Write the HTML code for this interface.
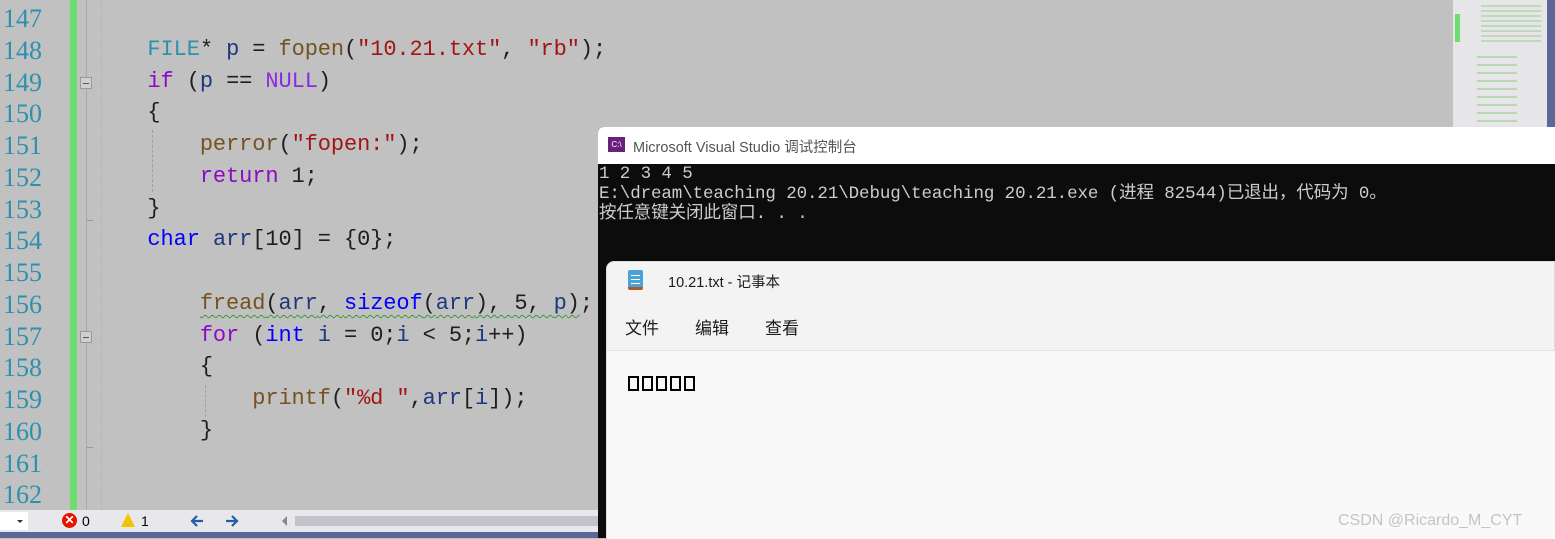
<!DOCTYPE html>
<html><head><meta charset="utf-8">
<style>
*{margin:0;padding:0;box-sizing:border-box}
body{width:1555px;height:538px;overflow:hidden;background:#c1c1c1;position:relative;font-family:"Liberation Mono","Noto Sans CJK SC",monospace}
.ed{position:absolute;left:0;top:0;width:1453px;height:510px;background:#c1c1c1}
.ln{position:absolute;left:3px;font-size:26px;color:#2b91af;font-family:"Liberation Serif",serif;line-height:30px}
.code{position:absolute;left:95px;font-size:22px;white-space:pre;color:#1e1e1e;letter-spacing:-0.1px}
.green{position:absolute;left:70px;top:0;width:7px;height:510px;background:#6edc6e}
.vl{position:absolute;left:86px;top:0;width:1px;height:510px;background:#a8a8a8}
.fold{position:absolute;left:80px;width:12px;height:12px;border:1px solid #999;background:#cfcfcf}
.fold:after{content:"";position:absolute;left:2px;top:5px;width:6px;height:1px;background:#555}
.guide{position:absolute;border-left:1px dashed #a0a0a0;width:0}
.kw{color:#8f08c4}.ty{color:#0000ff}.fn{color:#74531f}.st{color:#a31515}.va{color:#1f377f}.cl{color:#2b91af}
.mini{position:absolute;left:1453px;top:0;width:94px;height:510px;background:#e6e6e8}
.purple{position:absolute;left:1547px;top:0;width:8px;height:538px;background:#5b6897}
.status{position:absolute;left:0;top:510px;width:1555px;height:22px;background:#e8e8ec;font-family:"Liberation Sans",sans-serif;font-size:14px}
.bot{position:absolute;left:0;top:532px;width:1555px;height:6px;background:#5b6897}
.con{position:absolute;left:598px;top:127px;width:957px;height:411px;background:#0c0c0c;border-radius:6px 0 0 0}
.ctitle{position:absolute;left:0;top:0;width:957px;height:37px;background:#fff;border-radius:6px 0 0 0;font-family:"Liberation Sans","Noto Sans CJK SC",sans-serif;font-size:14.5px;color:#555}
.ctext{position:absolute;left:1px;top:37px;color:#cccccc;font-size:17.5px;line-height:20px;white-space:pre;font-family:"Liberation Mono","Noto Sans CJK SC",monospace;letter-spacing:-0.1px}
.np{position:absolute;left:606px;top:261px;width:949px;height:277px;background:#f3f3f3;border-radius:8px 0 0 0;border:1px solid #ddd;font-family:"Liberation Sans","Noto Sans CJK SC",sans-serif}
.npc{position:absolute;left:0;top:88px;width:949px;height:189px;background:#f9f9f9;border-top:1px solid #e3e3e3}
.sq{text-decoration:underline wavy #3a9a3a;text-underline-offset:5px;text-decoration-thickness:1px}
</style></head><body>
<div class="ed">
<div class="green"></div>
<div class="vl"></div>
<div class="fold" style="top:77px"></div>
<div class="fold" style="top:331px"></div>
<div class="guide" style="left:152px;top:130px;height:62px"></div>
<div class="guide" style="left:205px;top:385px;height:32px"></div>
<div class="guide" style="left:101px;top:0;height:510px;border-color:#b5b5b5"></div>
<div style="position:absolute;left:87px;top:220px;width:6px;height:1px;background:#999"></div>
<div style="position:absolute;left:87px;top:447px;width:6px;height:1px;background:#999"></div>

<div class="ln" style="top:4px">147</div>
<div class="ln" style="top:36px">148</div>
<div class="ln" style="top:68px">149</div>
<div class="ln" style="top:99px">150</div>
<div class="ln" style="top:131px">151</div>
<div class="ln" style="top:163px">152</div>
<div class="ln" style="top:195px">153</div>
<div class="ln" style="top:226px">154</div>
<div class="ln" style="top:258px">155</div>
<div class="ln" style="top:290px">156</div>
<div class="ln" style="top:322px">157</div>
<div class="ln" style="top:353px">158</div>
<div class="ln" style="top:385px">159</div>
<div class="ln" style="top:417px">160</div>
<div class="ln" style="top:449px">161</div>
<div class="ln" style="top:480px">162</div>

<div class="code" style="top:37px">    <span class="cl">FILE</span>* <span class="va">p</span> = <span class="fn">fopen</span>(<span class="st">"10.21.txt"</span>, <span class="st">"rb"</span>);</div>
<div class="code" style="top:69px">    <span class="kw">if</span> (<span class="va">p</span> == <span style="color:#8a2be2">NULL</span>)</div>
<div class="code" style="top:100px">    {</div>
<div class="code" style="top:132px">        <span class="fn">perror</span>(<span class="st">"fopen:"</span>);</div>
<div class="code" style="top:164px">        <span class="kw">return</span> 1;</div>
<div class="code" style="top:196px">    }</div>
<div class="code" style="top:227px">    <span class="ty">char</span> <span class="va">arr</span>[10] = {0};</div>
<div class="code" style="top:291px">        <span class="sq"><span class="fn">fread</span>(<span class="va">arr</span>, <span class="ty">sizeof</span>(<span class="va">arr</span>), 5, <span class="va">p</span>)</span>;</div>
<div class="code" style="top:323px">        <span class="kw">for</span> (<span class="ty">int</span> <span class="va">i</span> = 0;<span class="va">i</span> &lt; 5;<span class="va">i</span>++)</div>
<div class="code" style="top:354px">        {</div>
<div class="code" style="top:386px">            <span class="fn">printf</span>(<span class="st">"%d "</span>,<span class="va">arr</span>[<span class="va">i</span>]);</div>
<div class="code" style="top:418px">        }</div>
</div>

<div class="mini">
<div style="position:absolute;left:2px;top:14px;width:5px;height:28px;background:#6edc6e"></div>
<div style="position:absolute;left:28px;top:2px;width:60px;height:40px;background:repeating-linear-gradient(#e6e6e8 0 3px,#b6d6b0 3px 5px);opacity:.8"></div>
<div style="position:absolute;left:24px;top:50px;width:40px;height:75px;background:repeating-linear-gradient(#e6e6e8 0 6px,#b0d4a8 6px 8px);opacity:.8"></div>
</div>
<div class="purple"></div>

<div class="status">
<div style="position:absolute;left:0;top:2px;width:28px;height:18px;background:#fff"></div>
<div style="position:absolute;left:17px;top:10px;border:3px solid transparent;border-top:3px solid #333"></div>
<div style="position:absolute;left:62px;top:3px;width:15px;height:15px;border-radius:50%;background:#e51400;color:#fff;font-size:12px;line-height:15px;text-align:center;font-weight:bold">✕</div>
<div style="position:absolute;left:82px;top:3px">0</div>
<div style="position:absolute;left:121px;top:3px;width:0;height:0;border-left:7px solid transparent;border-right:7px solid transparent;border-bottom:14px solid #f5c400"></div>
<div style="position:absolute;left:141px;top:3px">1</div>
<svg style="position:absolute;left:189px;top:4px" width="16" height="14" viewBox="0 0 16 14"><path d="M14 7H3M8 2L3 7l5 5" stroke="#1e5fa8" stroke-width="2.2" fill="none"/></svg>
<svg style="position:absolute;left:224px;top:4px" width="16" height="14" viewBox="0 0 16 14"><path d="M2 7h11M8 2l5 5-5 5" stroke="#1e5fa8" stroke-width="2.2" fill="none"/></svg>
<div style="position:absolute;left:282px;top:6px;border:5px solid transparent;border-right:5px solid #888;border-left:0"></div>
<div style="position:absolute;left:295px;top:6px;width:310px;height:10px;background:#c2c3c9"></div>
</div>
<div class="bot"></div>

<div class="con">
<div class="ctitle">
<div style="position:absolute;left:10px;top:10px;width:17px;height:15px;background:#68217a;color:#fff;font-size:8px;line-height:15px;text-align:center;font-family:'Liberation Sans',sans-serif">C:\</div>
<div style="position:absolute;left:35px;top:9px">Microsoft Visual Studio 调试控制台</div>
</div>
<div class="ctext">1 2 3 4 5
E:\dream\teaching 20.21\Debug\teaching 20.21.exe (进程 82544)已退出，代码为 0。
按任意键关闭此窗口. . .</div>
</div>

<div class="np">
<div style="position:absolute;left:21px;top:8px;width:15px;height:20px;background:#4aa3d8;border-radius:2px;border-bottom:3px solid #b35a1f"></div>
<div style="position:absolute;left:24px;top:13px;width:9px;height:1px;background:#fff;box-shadow:0 4px #fff,0 8px #fff"></div>
<div style="position:absolute;left:61px;top:9px;font-size:14.5px;color:#1b1b1b">10.21.txt - 记事本</div>
<div style="position:absolute;left:18px;top:52px;font-size:17px;color:#1b1b1b">文件</div>
<div style="position:absolute;left:88px;top:52px;font-size:17px;color:#1b1b1b">编辑</div>
<div style="position:absolute;left:158px;top:52px;font-size:17px;color:#1b1b1b">查看</div>
<div class="npc">
<div style="position:absolute;left:21px;top:25px;display:flex;gap:3px">
<span style="width:11px;height:15px;border:2px solid #000"></span><span style="width:11px;height:15px;border:2px solid #000"></span><span style="width:11px;height:15px;border:2px solid #000"></span><span style="width:11px;height:15px;border:2px solid #000"></span><span style="width:11px;height:15px;border:2px solid #000"></span>
</div>
<div style="position:absolute;left:731px;top:161px;font-size:16px;color:#c4c4c4;font-family:'Liberation Sans',sans-serif">CSDN @Ricardo_M_CYT</div>
</div>
</div>
</body></html>
